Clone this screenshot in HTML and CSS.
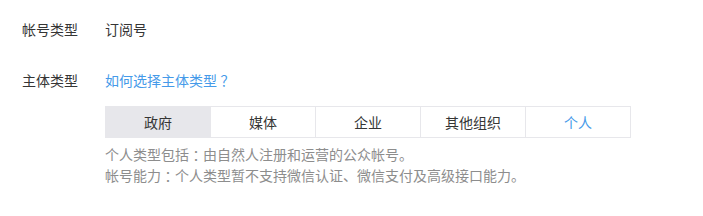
FILE: index.html
```html
<!DOCTYPE html>
<html lang="zh-CN">
<head>
    <meta charset="UTF-8">
    <title>账号信息</title>
    <link rel="stylesheet" href="styles.css">
</head>
<body>
<div class="form">
    <div class="form-row">
        <label class="form-label">帐号类型</label>
        <div class="form-value">订阅号</div>
    </div>
    <div class="form-row main-type">
        <label class="form-label">主体类型</label>
        <div class="form-value">
            <a class="help-link" href="#">如何选择主体类型<span class="punct">？</span></a>
            <ul class="tabs">
                <li class="tab active">政府</li>
                <li class="tab">媒体</li>
                <li class="tab">企业</li>
                <li class="tab">其他组织</li>
                <li class="tab current">个人</li>
            </ul>
            <p class="tips">个人类型包括<span class="punct">：</span>由自然人注册和运营的公众帐号。</p>
            <p class="tips">帐号能力<span class="punct">：</span>个人类型暂不支持微信认证、微信支付及高级接口能力。</p>
        </div>
    </div>
</div>
</body>
</html>
```

FILE: styles.css
```css
body {
    margin: 0;
    background: #fff;
    font-family: "Microsoft YaHei", "Noto Sans CJK SC", sans-serif;
    font-size: 14px;
    color: #353535;
}
.form {
    padding: 19px 0 0 22px;
}
.form-row {
    display: flex;
    line-height: 20px;
}
.main-type {
    margin-top: 31px;
}
.form-label {
    width: 83px;
    flex-shrink: 0;
}
.help-link {
    color: #459ae9;
    text-decoration: none;
}
/* full-width punctuation sits centred in the original font */
.punct {
    display: inline-block;
    width: 1em;
    text-align: center;
    font-feature-settings: "halt";
}
.tabs {
    list-style: none;
    margin: 16px 0 6px 0;
    padding: 0;
    display: flex;
    width: 524px;
    border: 1px solid #e7e7eb;
}
.tab {
    flex: 1;
    text-align: center;
    height: 30px;
    line-height: 30px;
    border-left: 1px solid #e7e7eb;
}
.tab:first-child {
    border-left: none;
}
.tab.active {
    background: #e7e7eb;
}
.tab.current {
    color: #459ae9;
}
.tips {
    margin: 0;
    color: #8d8d8d;
    line-height: 21px;
}
```
